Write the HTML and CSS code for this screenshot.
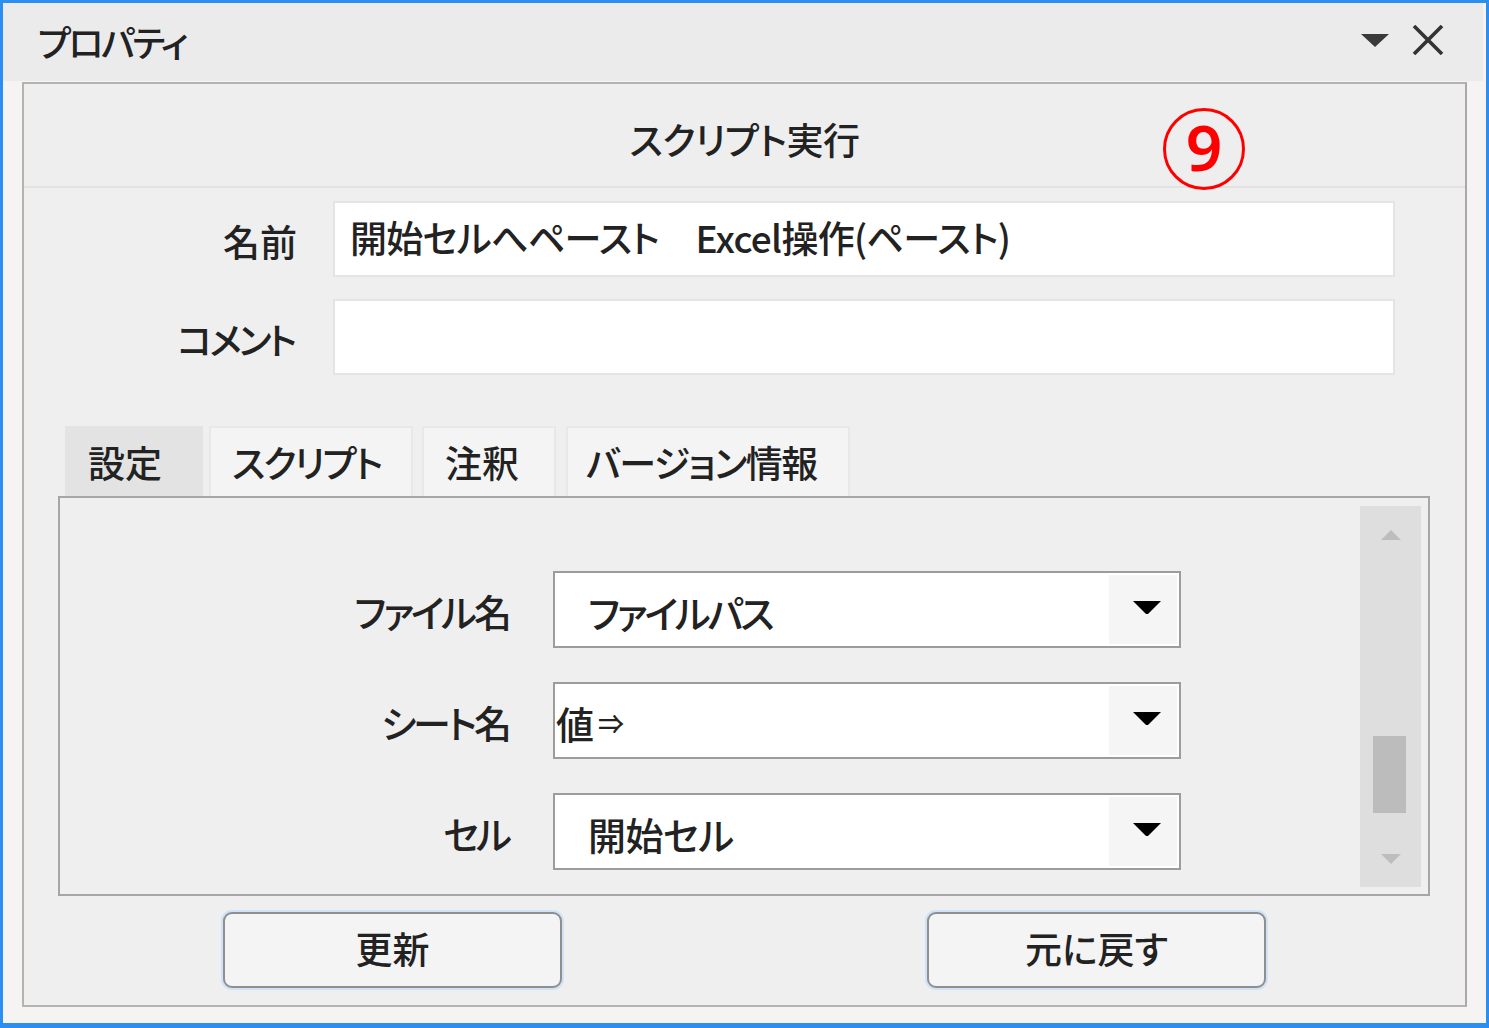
FILE: index.html
```html
<!DOCTYPE html>
<html lang="ja">
<head>
<meta charset="utf-8">
<title>プロパティ</title>
<link rel="stylesheet" href="styles.css">
</head>
<body>
<div class="window">
  <div class="titlebar">
    <span class="titlebar__text">プロパティ</span>
    <div class="titlebar__tools">
      <svg class="titlebar__menu" width="28" height="13" viewBox="0 0 28 13"><path d="M0 0 H28 L14 13 Z" fill="#3a3a3a"/></svg>
      <svg class="titlebar__close" width="34" height="30" viewBox="0 0 34 30"><path d="M3 1 L31 29 M31 1 L3 29" stroke="#333" stroke-width="3.6" fill="none"/></svg>
    </div>
  </div>
  <div class="window__body">
    <div class="panel">
      <div class="panel__header">
        <span class="panel__title">スクリプト実行</span>
        <span class="marker">9</span>
      </div>
      <div class="fields">
        <label class="fields__label">名前</label>
        <div class="fields__input">開始セルへペースト　Excel操作(ペースト)</div>
        <label class="fields__label fields__label--kana">コメント</label>
        <div class="fields__input"></div>
      </div>
      <div class="tabs">
        <div class="tab tab--active tab--settings">設定</div>
        <div class="tab tab--script">スクリプト</div>
        <div class="tab tab--notes">注釈</div>
        <div class="tab tab--version">バージョン情報</div>
      </div>
      <div class="tabbox">
        <div class="settings">
          <span class="settings__label">ファイル名</span>
          <div class="combo">
            <span class="combo__value">ファイルパス</span>
            <span class="combo__button"><svg width="28" height="13" viewBox="0 0 28 13"><path d="M0 0 H28 L15.5 12.5 Q14 13.5 12.5 12.5 Z" fill="#000"/></svg></span>
          </div>
          <span class="settings__label">シート名</span>
          <div class="combo">
            <span class="combo__value combo__value--flush">値<span class="combo__arrow">⇒</span></span>
            <span class="combo__button"><svg width="28" height="13" viewBox="0 0 28 13"><path d="M0 0 H28 L15.5 12.5 Q14 13.5 12.5 12.5 Z" fill="#000"/></svg></span>
          </div>
          <span class="settings__label">セル</span>
          <div class="combo">
            <span class="combo__value combo__value--kanji">開始セル</span>
            <span class="combo__button"><svg width="28" height="13" viewBox="0 0 28 13"><path d="M0 0 H28 L15.5 12.5 Q14 13.5 12.5 12.5 Z" fill="#000"/></svg></span>
          </div>
        </div>
        <div class="scrollbar">
          <svg class="scrollbar__up" width="20" height="10" viewBox="0 0 20 10"><path d="M0 10 L10 0 L20 10 Z" fill="#bdbdbd"/></svg>
          <div class="scrollbar__track"><div class="scrollbar__thumb"></div></div>
          <svg class="scrollbar__down" width="20" height="10" viewBox="0 0 20 10"><path d="M0 0 L20 0 L10 10 Z" fill="#bdbdbd"/></svg>
        </div>
      </div>
      <div class="actions">
        <button class="btn">更新</button>
        <button class="btn">元に戻す</button>
      </div>
    </div>
  </div>
</div>
</body>
</html>
```

FILE: styles.css
```css
* { box-sizing: border-box; }

html, body {
  margin: 0;
  padding: 0;
}

body {
  font-family: "Noto Sans CJK JP", "Noto Sans", sans-serif;
  font-weight: 500;
  color: #1c1c1c;
  font-feature-settings: "palt";
}

.window {
  width: 1489px;
  height: 1028px;
  border: 3px solid #2b8ef0;
  border-bottom-width: 5px;
  background: #f5f4f2;
  display: flex;
  flex-direction: column;
}

/* title bar */
.titlebar {
  height: 78px;
  flex: none;
  background: #ebebeb;
  display: flex;
  align-items: center;
  padding: 0 38px 0 35px;
  margin-right: 3px;
}

.titlebar__text {
  font-size: 36px;
  line-height: 1;
  margin-top: -2px;
  letter-spacing: -2.5px;
  color: #222;
}

.titlebar__tools {
  margin-left: auto;
  display: flex;
  align-items: center;
  gap: 22px;
  margin-top: -5px;
}

.titlebar__menu { margin-top: 2px; }

.window__body {
  flex: 1;
  padding: 1px 19px 16px 19px;
  display: flex;
}

/* main panel */
.panel {
  flex: 1;
  border: 2px solid #b3b3b3;
  border-right-color: #a9a9a9;
  background: #efefef;
  display: flex;
  flex-direction: column;
}

.panel__header {
  position: relative;
  height: 104px;
  border-bottom: 2px solid #e2e2e2;
  display: flex;
  align-items: center;
  justify-content: center;
  background: #eeeeee;
}

.panel__title {
  font-size: 37px;
  line-height: 1;
  margin-top: 8px;
  letter-spacing: -0.5px;
  color: #222;
}

/* numbered annotation circle */
.marker {
  position: absolute;
  left: 1139px;
  top: 24px;
  width: 82px;
  height: 82px;
  border: 3px solid #ff0000;
  border-radius: 50%;
  color: #ff0000;
  font-family: "Noto Sans", sans-serif;
  font-weight: 600;
  font-size: 64px;
  line-height: 1;
  display: flex;
  align-items: center;
  justify-content: center;
  padding-bottom: 4px;
}

/* name / comment */
.fields {
  display: grid;
  grid-template-columns: 273px 1062px;
  column-gap: 36px;
  row-gap: 22px;
  padding-top: 13px;
}

.fields__label {
  text-align: right;
  font-size: 37px;
  line-height: 1;
  align-self: center;
  margin-top: 4px;
  color: #222;
}

.fields__label--kana { letter-spacing: -3px; margin-right: 3px; }

.fields__input {
  height: 76px;
  background: #fff;
  border: 2px solid #e4e4e4;
  font-size: 37px;
  line-height: 1;
  padding: 16px 0 0 15px;
  white-space: nowrap;
  letter-spacing: -0.7px;
  color: #222;
}

/* tabs */
.tabs {
  display: flex;
  align-items: flex-end;
  margin: 51px 0 0 41px;
  height: 70px;
}

.tab {
  height: 70px;
  padding: 16px 0 0 21px;
  font-size: 37px;
  line-height: 1;
  background: #f4f4f4;
  border: 2px solid #e8e8e8;
  border-bottom: none;
  letter-spacing: -2px;
  white-space: nowrap;
  color: #222;
}

.tab--active {
  background: #e3e3e3;
  border-color: #e3e3e3;
}

.tab--settings { width: 138px; letter-spacing: 0; }
.tab--script { width: 204px; margin-left: 6px; }
.tab--notes { width: 134px; margin-left: 9px; letter-spacing: 0; }
.tab--version { width: 284px; margin-left: 10px; padding-left: 18px; letter-spacing: -1.5px; }

.tabbox {
  margin: 0 35px 0 34px;
  height: 400px;
  border: 2px solid #a6a6a6;
  background: #efefef;
  display: flex;
  padding: 8px 7px 7px 0;
}

.settings {
  flex: 1;
  display: grid;
  grid-template-columns: 452px 628px;
  column-gap: 41px;
  row-gap: 34px;
  align-content: start;
  padding-top: 65px;
}

.settings__label {
  text-align: right;
  font-size: 38px;
  line-height: 1;
  align-self: center;
  margin-top: 2px;
  letter-spacing: -3px;
  margin-right: 3px;
  color: #222;
}

.combo {
  height: 77px;
  background: #fff;
  border: 2px solid #9c9c9c;
  display: flex;
  align-items: stretch;
}

.combo__value {
  flex: 1;
  font-size: 38px;
  line-height: 1;
  padding: 20px 0 0 33px;
  letter-spacing: -3px;
  color: #222;
}

.combo__value--flush { padding-left: 1px; letter-spacing: 0; }
.combo__value--kanji { letter-spacing: -0.5px; }

.combo__arrow {
  font-size: 26px;
  margin-left: 4px;
  vertical-align: 5px;
}

.combo__button {
  width: 68px;
  margin: 2px 2px 2px 0;
  background: #f5f5f5;
  display: flex;
  align-items: center;
  justify-content: center;
  padding-bottom: 4px;
  padding-left: 7px;
}

/* vertical scrollbar */
.scrollbar {
  width: 61px;
  background: #dedede;
  display: flex;
  flex-direction: column;
  align-items: center;
  margin-left: 179px;
}

.scrollbar__up { margin-top: 24px; flex: none; }
.scrollbar__down { margin-bottom: 23px; flex: none; }

.scrollbar__track {
  flex: 1;
  width: 100%;
  position: relative;
}

.scrollbar__thumb {
  position: absolute;
  left: 13px;
  width: 33px;
  top: 196px;
  height: 77px;
  background: #bcbcbc;
}

/* bottom buttons */
.actions {
  display: flex;
  padding: 16px 0 0 199px;
  gap: 365px;
}

.btn {
  width: 339px;
  height: 76px;
  border: 2px solid #8f8f8f;
  border-radius: 9px;
  background: #f4f4f4;
  box-shadow: 0 0 0 2px #cfe2f7;
  font-family: inherit;
  font-weight: 500;
  font-size: 37px;
  line-height: 1;
  color: #222;
  padding: 0 0 4px 0;
  font-feature-settings: "palt";
}
```
